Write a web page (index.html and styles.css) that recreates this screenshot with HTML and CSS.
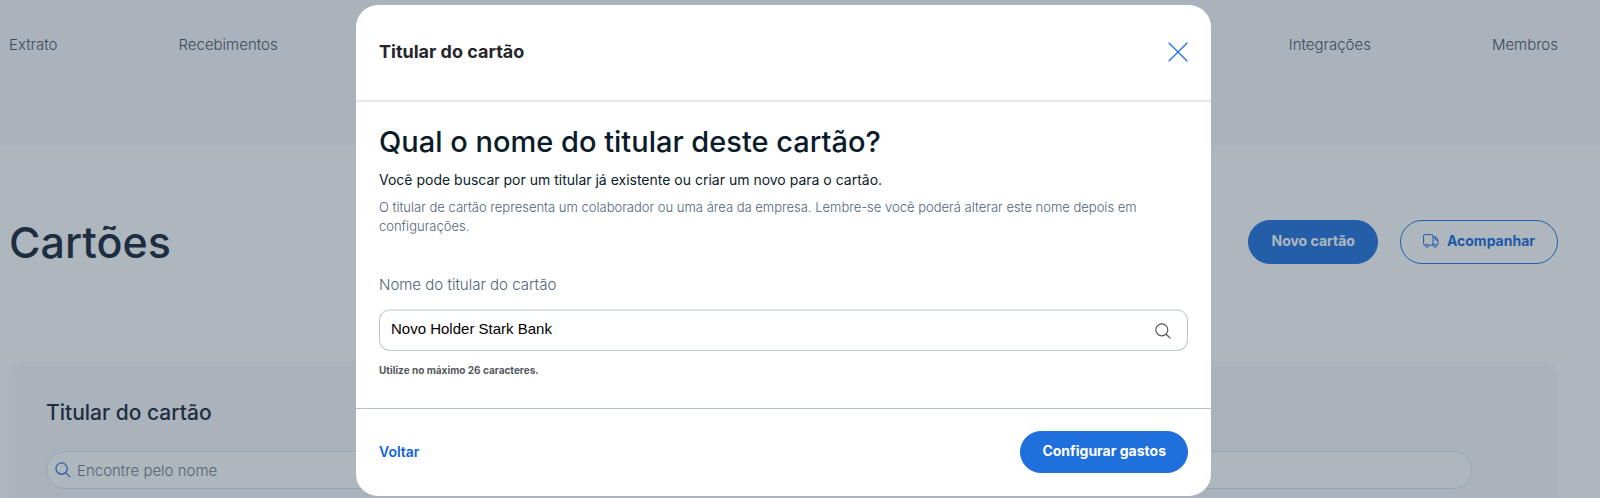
FILE: index.html
```html
<!DOCTYPE html>
<html lang="pt-BR">
<head>
<meta charset="utf-8">
<meta name="viewport" content="width=device-width, initial-scale=1">
<title>Cartões</title>
<link rel="stylesheet" href="styles.css">
</head>
<body>
<header class="topbar">
  <nav class="nav">
    <div class="nav-group">
      <a href="#extrato">Extrato</a>
      <a href="#recebimentos">Recebimentos</a>
    </div>
    <div class="nav-group">
      <a href="#integracoes">Integrações</a>
      <a href="#membros">Membros</a>
    </div>
  </nav>
</header>
<main class="page">
  <div class="page-head">
    <h1 class="page-title">Cartões</h1>
    <div class="actions">
      <button class="btn btn-primary" type="button">Novo cartão</button>
      <button class="btn btn-outline" type="button">
        <svg width="16" height="14" viewBox="0 0 16 14" fill="none" stroke="currentColor" aria-hidden="true"><path d="M2.5 11.2H2A1.4 1.4 0 0 1 .6 9.8V2A1.4 1.4 0 0 1 2 .6H8.6A1.4 1.4 0 0 1 10 2V11.2H5.500M10 2.800H12.200A1.200 1.200 0 0 1 13.200 3.300L15 6V10A1.200 1.200 0 0 1 13.800 11.200H13.500M12.300 3V6H15"/><circle cx="4" cy="11.700" r="1.500"/><circle cx="12" cy="11.700" r="1.500"/></svg>
        Acompanhar
      </button>
    </div>
  </div>
  <section class="panel">
    <h2 class="panel-title">Titular do cartão</h2>
    <div class="search">
      <svg width="16" height="16" viewBox="0 0 17 17" fill="none" stroke="currentColor" stroke-width="1.400" aria-hidden="true"><circle cx="7" cy="7" r="6"/><path d="M11.300 11.300L16 16"/></svg>
      <input type="text" placeholder="Encontre pelo nome" aria-label="Encontre pelo nome">
    </div>
  </section>
</main>
<div class="overlay">
  <div class="modal" role="dialog" aria-modal="true" aria-labelledby="modal-title">
    <div class="modal-head">
      <h2 class="modal-title" id="modal-title">Titular do cartão</h2>
      <button class="close" type="button" aria-label="Fechar">
        <svg width="20" height="20" viewBox="0 0 20 20" fill="none" stroke="currentColor" stroke-width="1.300" aria-hidden="true"><path d="M.7.7L19.300 19.300M19.300.7L.7 19.300"/></svg>
      </button>
    </div>
    <form class="modal-form">
      <div class="modal-body">
        <h3 class="question">Qual o nome do titular deste cartão?</h3>
        <p class="lead">Você pode buscar por um titular já existente ou criar um novo para o cartão.</p>
        <p class="note">O titular de cartão representa um colaborador ou uma área da empresa. Lembre-se você poderá alterar este nome depois em configurações.</p>
        <label class="label" for="holder">Nome do titular do cartão</label>
        <div class="field">
          <input id="holder" type="text" maxlength="26" value="Novo Holder Stark Bank" aria-describedby="holder-help">
          <svg width="16" height="16" viewBox="0 0 16 16" fill="none" stroke="currentColor" stroke-width="1.200" aria-hidden="true"><circle cx="6.800" cy="6.800" r="6"/><path d="M11 11L15.300 15.300"/></svg>
        </div>
        <p class="help" id="holder-help">Utilize no máximo 26 caracteres.</p>
      </div>
      <div class="modal-foot">
        <button class="back" type="button">Voltar</button>
        <button class="btn btn-primary btn-small" type="button">Configurar gastos</button>
      </div>
    </form>
  </div>
</div>
</body>
</html>
```
FILE: styles.css
```css
* { box-sizing: border-box; }

body {
  margin: 0;
  height: 100vh;
  overflow: hidden;
  background: #fff;
  color: #132232;
  font-family: Inter, "Open Sans", sans-serif;
  font-size: 15px;
}

h1, h2, h3, p { margin: 0; }

button, input { font-family: inherit; font-size: inherit; }

button {
  padding: 0;
  border: 0;
  background: none;
  cursor: pointer;
}

svg { display: block; flex: none; }

.topbar {
  padding: 35px 42px 90px 9px;
  background: #f8f9fb;
}

.nav, .nav-group {
  display: flex;
  justify-content: space-between;
}

.nav-group { gap: 121px; }

.nav a {
  color: #45525f;
  font-weight: 300;
  line-height: 20px;
  text-decoration: none;
}

.page { padding: 75px 42px 0 9px; }

.page-head {
  display: flex;
  align-items: center;
  justify-content: space-between;
  margin-bottom: 97px;
}

.page-title {
  font-size: 43px;
  font-weight: 500;
  line-height: 44px;
}

.actions { display: flex; gap: 22px; }

.btn {
  display: flex;
  align-items: center;
  gap: 8px;
  padding: 11px 22px 13px;
  border: 1px solid #1f6fdc;
  border-radius: 22px;
  font-size: 14px;
  font-weight: 700;
  line-height: 18px;
}

.btn-primary { background: #1f6fdc; color: #fff; }

.btn-outline { color: #1568dc; }

.btn-small { padding: 10px 21px 12px; }

.panel {
  padding: 40px 86px 20px 37px;
  border-radius: 16px;
  background: #f8f9fb;
}

.panel-title {
  margin-bottom: 26px;
  font-size: 21px;
  font-weight: 500;
  line-height: 24px;
}

.search {
  display: flex;
  align-items: center;
  gap: 6px;
  padding: 0 8px;
  border: 1px solid #dfe2ea;
  border-radius: 19px;
  background: #fff;
  color: #3072e0;
}

.search input {
  flex: 1;
  height: 36px;
  padding: 0;
  border: 0;
  background: none;
  outline: 0;
  font-weight: 300;
}

.search input::placeholder { color: #6f7882; opacity: 1; }

.overlay {
  position: fixed;
  inset: 0;
  display: flex;
  align-items: center;
  justify-content: center;
  padding: 5px 33px 2px 0;
  background: rgba(47, 68, 88, 0.39);
}

.modal {
  width: 100%;
  max-width: 855px;
  border-radius: 22px;
  background: #fff;
}

.modal-head {
  display: flex;
  align-items: center;
  justify-content: space-between;
  padding: 36px 23px 37px;
  border-bottom: 2px solid #e5e7ea;
}

.modal-title {
  color: #24262b;
  font-size: 18px;
  font-weight: 700;
  line-height: 22px;
}

.close { color: #1f6fdc; }

.modal-body { padding: 22px 23px 31px; }

.question {
  color: #0b1b2a;
  font-size: 29px;
  font-weight: 500;
  line-height: 36px;
}

.lead {
  margin-top: 10px;
  color: #0b1b2a;
  font-size: 14px;
  font-weight: 400;
  line-height: 20px;
}

.note {
  margin-top: 8px;
  color: #50637a;
  font-size: 13px;
  font-weight: 300;
  line-height: 19px;
}

.label {
  display: block;
  margin-top: 39px;
  color: #50637a;
  font-weight: 300;
  line-height: 20px;
}

.field {
  display: flex;
  align-items: center;
  margin-top: 14px;
  padding: 0 16px 0 11px;
  border: 1px solid #c0c8d0;
  border-top: 2px solid #dbe0e4;
  border-radius: 11px;
  color: #555;
}

.field input {
  flex: 1;
  height: 39px;
  padding: 0 0 4px;
  border: 0;
  background: none;
  color: #000;
  outline: 0;
  font-family: "Liberation Sans", Arial, sans-serif;
}

.help {
  margin-top: 12px;
  color: #55585c;
  font-size: 10px;
  font-weight: 700;
  line-height: 14px;
}

.modal-foot {
  display: flex;
  align-items: center;
  justify-content: space-between;
  padding: 22px 23px 23px;
  border-top: 1px solid #b4bfc7;
}

.back {
  color: #0f63e0;
  font-size: 14px;
  font-weight: 600;
  line-height: 18px;
}
```
